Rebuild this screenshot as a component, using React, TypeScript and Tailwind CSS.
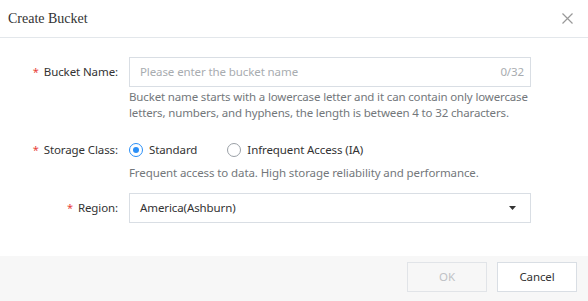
import { useState } from "react";

// Create Bucket dialog
export default function App() {
  const [name, setName] = useState("");
  const [storage, setStorage] = useState<"standard" | "ia">("standard");

  return (
    <div className="w-[588px] h-[301px] bg-white flex flex-col overflow-hidden font-['Noto_Sans',sans-serif] text-[11.5px] tracking-[-0.1px] text-[#333]">
      {/* HEADER */}
      <div className="h-[38px] flex items-center justify-between pl-[8px] pr-[15px] border-b border-[#e3e7eb]">
        <span className="font-['Liberation_Serif',serif] text-[14px] tracking-normal text-[#333]">Create Bucket</span>
        <svg width="11" height="11" viewBox="0 0 11 11" className="text-[#999]">
          <path d="M0.5 0.5L10.5 10.5M10.5 0.5L0.5 10.5" stroke="currentColor" strokeWidth="1.2" />
        </svg>
      </div>

      {/* BODY */}
      <div className="flex-1 pt-[19px]">
        {/* Bucket name */}
        <div className="flex">
          <Label text="Bucket Name:" className="h-[30px]" />
          <div className="w-[402px]">
            <div className="h-[30px] border border-[#d9dee4] flex items-center pl-[10px] pr-[6px]">
              <input
                value={name}
                maxLength={32}
                onChange={(e) => setName(e.target.value)}
                placeholder="Please enter the bucket name"
                className="flex-1 outline-none bg-transparent placeholder:text-[#a8acb0] text-[#333]"
              />
              <span className="text-[#a8acb0]">{name.length}/32</span>
            </div>
            <p className="mt-[2px] mr-[-12px] leading-[16px] tracking-[-0.15px] text-[#73777b]">
              Bucket name starts with a lowercase letter and it can contain only lowercase letters, numbers, and hyphens, the length is between 4 to 32 characters.
            </p>
          </div>
        </div>

        {/* Storage class */}
        <div className="flex mt-[15px]">
          <Label text="Storage Class:" className="h-[28px]" />
          <div className="w-[402px]">
            <div className="h-[28px] flex items-center gap-[30px]">
              <Radio label="Standard" checked={storage === "standard"} onClick={() => setStorage("standard")} />
              <Radio label="Infrequent Access (IA)" checked={storage === "ia"} onClick={() => setStorage("ia")} />
            </div>
            <p className="mt-[1px] leading-[16px] text-[#73777b]">
              Frequent access to data. High storage reliability and performance.
            </p>
          </div>
        </div>

        {/* Region */}
        <div className="flex mt-[12px]">
          <Label text="Region:" className="h-[30px]" />
          <div className="w-[402px] h-[30px] border border-[#d9dee4] flex items-center justify-between pl-[10px] pr-[14px]">
            <span>America(Ashburn)</span>
            <svg width="7" height="4" viewBox="0 0 7 4">
              <path d="M0 0H7L3.5 4Z" fill="#333" />
            </svg>
          </div>
        </div>
      </div>

      {/* FOOTER */}
      <div className="h-[45px] bg-[#f7f7f7] flex justify-end items-start pt-[6px] pr-[11px] gap-[10px]">
        <button disabled className="w-[80px] h-[30px] border border-[#e1e4e8] text-[#bfc2c5] bg-[#f7f7f7]">
          OK
        </button>
        <button className="w-[80px] h-[30px] border border-[#d9dee4] bg-white text-[#333]">Cancel</button>
      </div>
    </div>
  );
}

function Label({ text, className }: { text: string; className?: string }) {
  return (
    <div className={`w-[129px] pr-[11px] flex items-center justify-end text-[#333] ${className ?? ""}`}>
      <span className="text-[#e8423a] mr-[5px] text-[11px]">*</span>
      {text}
    </div>
  );
}

function Radio({ label, checked, onClick }: { label: string; checked: boolean; onClick: () => void }) {
  return (
    <button onClick={onClick} className="flex items-center gap-[6px] text-[#333]">
      <span
        className={`w-[14px] h-[14px] rounded-full border flex items-center justify-center ${
          checked ? "border-[#2a8ff7]" : "border-[#9aa0a6]"
        }`}
      >
        {checked && <span className="w-[6px] h-[6px] rounded-full bg-[#2a8ff7]" />}
      </span>
      {label}
    </button>
  );
}
